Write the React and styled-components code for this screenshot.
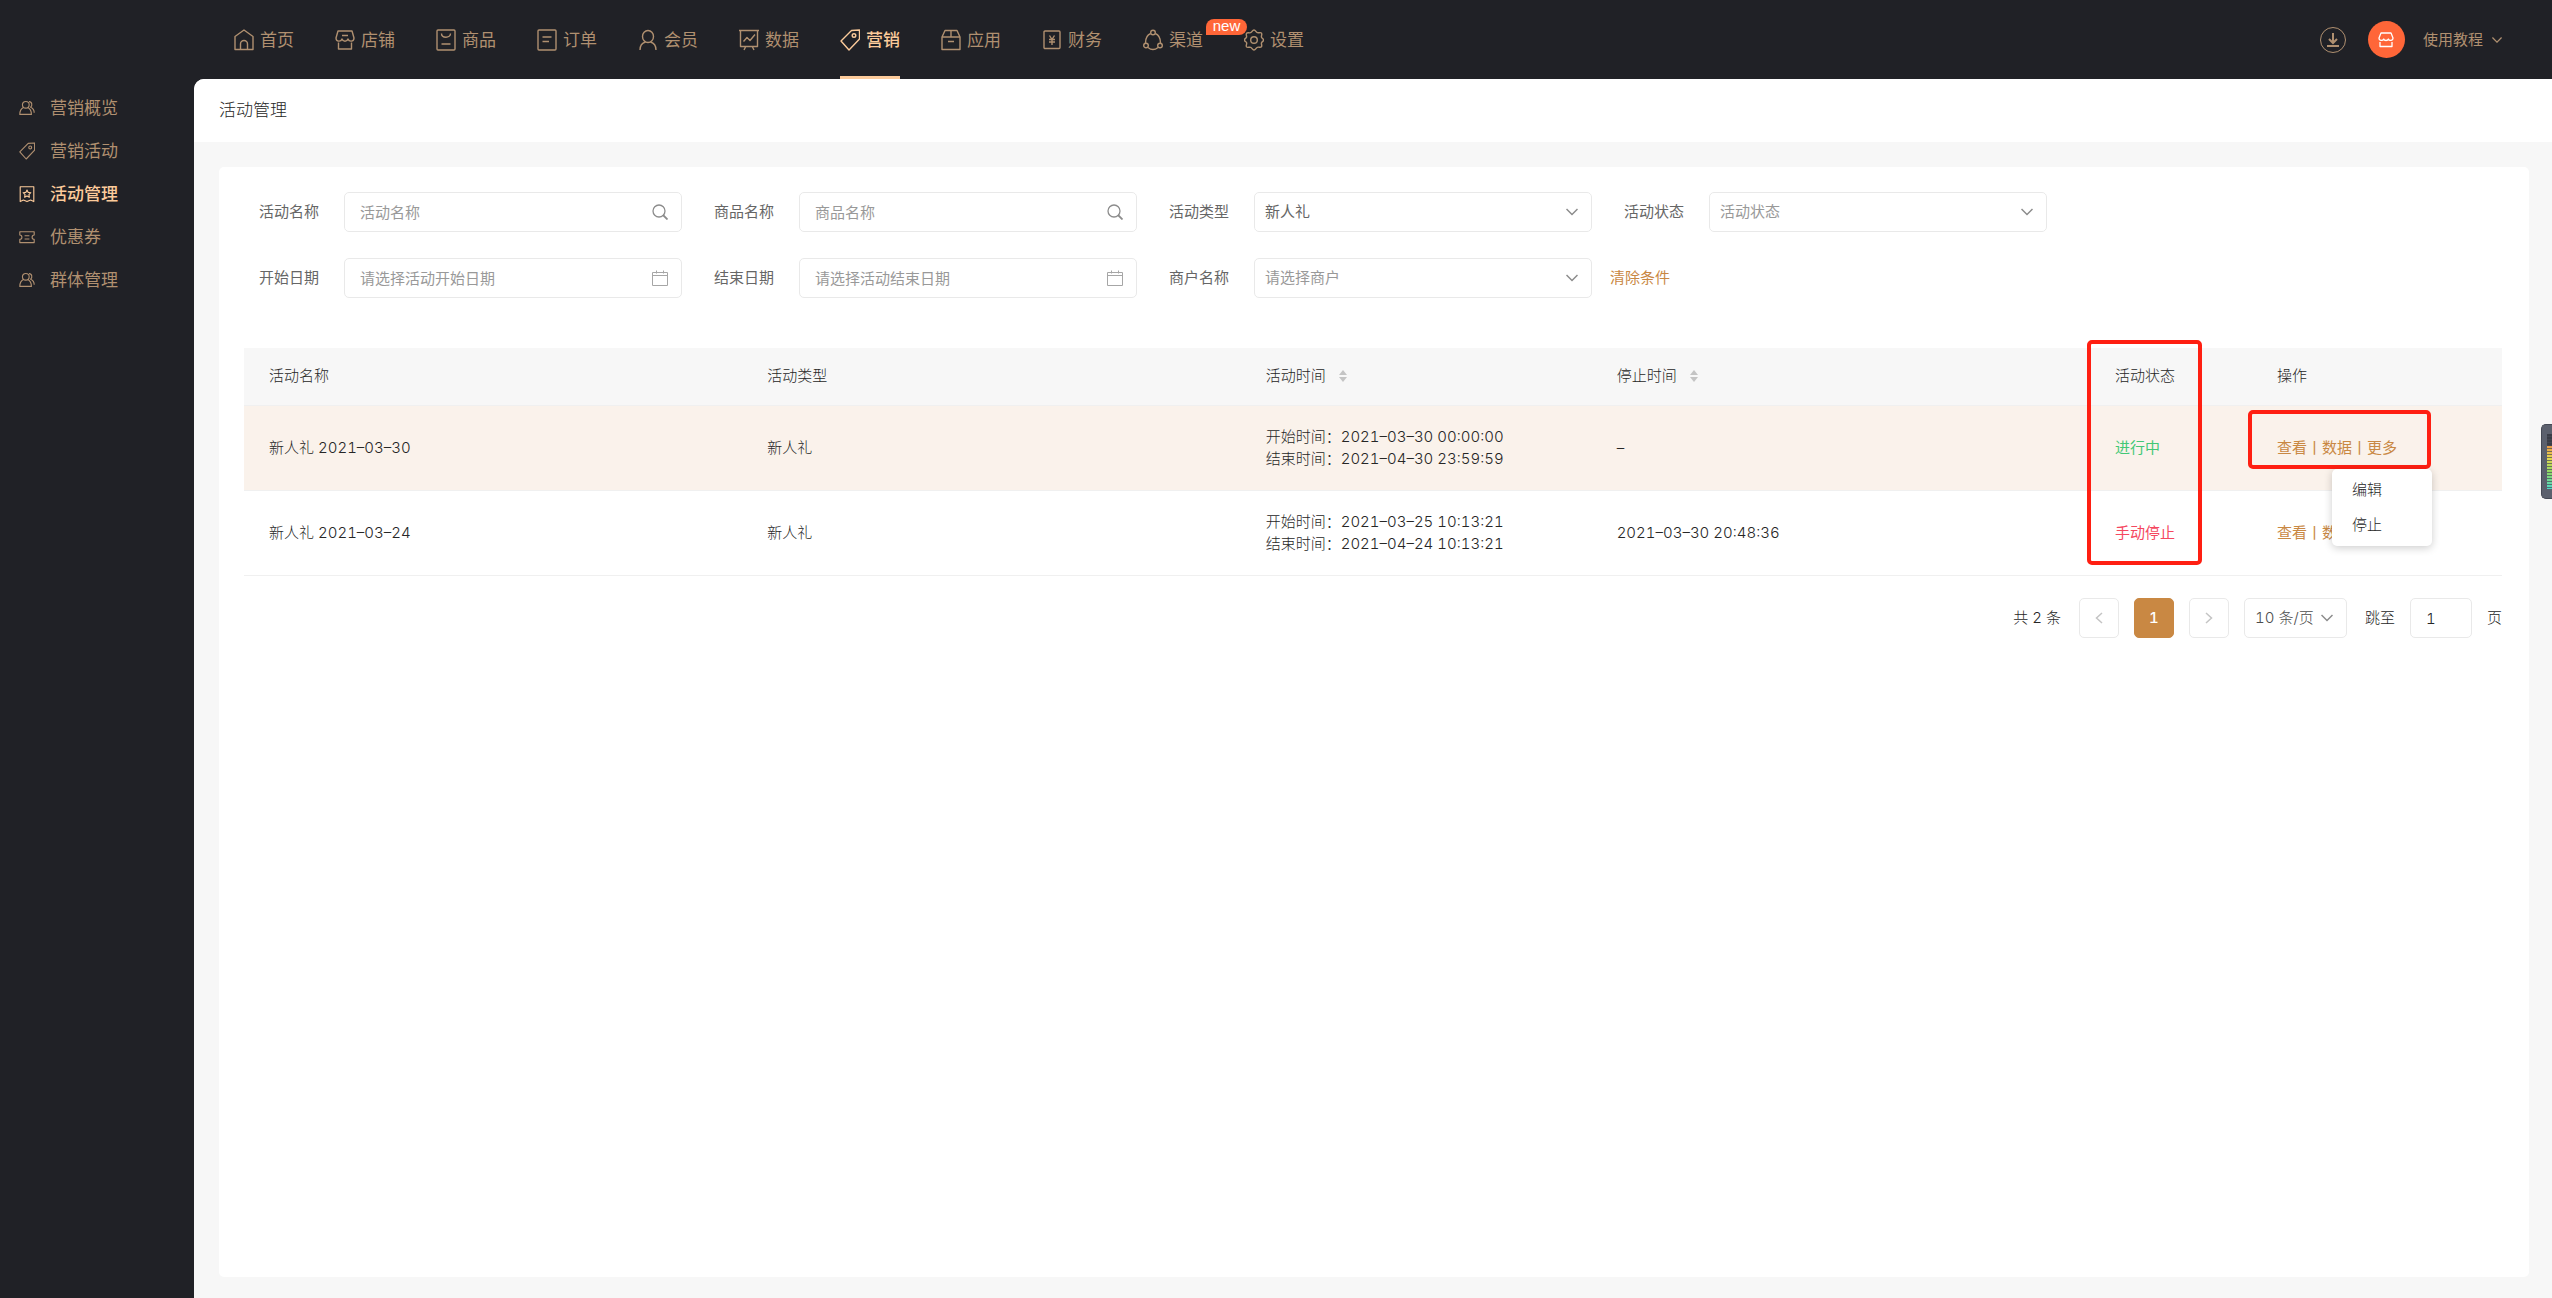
import { useState } from "react";
import styled, { createGlobalStyle, css } from "styled-components";

const theme = {
  dark: "#202126",
  sand: "#b09070",
  sandActive: "#fccb9b",
  primary: "#c98843",
  text: "#262626",
  label: "#666666",
  placeholder: "#999999",
  border: "#e9e9e9",
  grey: "#f7f7f7",
  white: "#ffffff",
  green: "#42c876",
  red: "#f5485f",
  orange: "#ff6638",
  mark: "#ff1f12",
};

/* ---------- icons ---------- */

const icons = {
  home: (
    <>
      <path d="M1 7.500 10 1l9 6.500V20.500H1z" />
      <path d="M6.500 20.500V15a3.500 3.500 0 0 1 7 0v5.500" />
    </>
  ),
  shop: (
    <>
      <path d="M3 2h14l2 7c0 4-5 4-6 1-1 3-5 3-6 0-1 3-6 3-6-1z" />
      <path d="M7 6.500h6M3.500 13.500v6.500h13v-6.500" />
    </>
  ),
  goods: (
    <>
      <rect x="1" y="1" width="18" height="20" rx="1" />
      <path d="M5.500 4.500c0 5 9 5 9 0M5.500 15h9" />
    </>
  ),
  order: (
    <>
      <rect x="1" y="1" width="18" height="20" rx="1" />
      <path d="M5.500 8h9M5.500 12.500H12" />
    </>
  ),
  member: (
    <>
      <ellipse cx="10" cy="7.500" rx="5.500" ry="6" />
      <path d="M2 21c0-4 2-7 5.500-8M18 21c0-4-2-7-5.500-8" />
    </>
  ),
  data: (
    <>
      <path d="M0 1.500h20M1.500 1.500v16h17v-16M6.500 18 5 21M13.500 18l1.500 3" />
      <path d="m4.500 12.500 3.500-4 3 3 5-6" />
    </>
  ),
  tag: (
    <>
      <path d="M1 12 11.500 1.500 19.500 1v9L9 21z" />
      <circle cx="14" cy="6.500" r="1.800" />
    </>
  ),
  app: (
    <>
      <path d="M1 8v12.500h18V8l-3-6.500H4zM1 8h18M10 1.500V8M7 12.500h6" />
    </>
  ),
  finance: (
    <>
      <rect x="2" y="2" width="16" height="17.500" rx="1" />
      <path d="m7.500 6.500 2.500 4 2.500-4M10 10.500v5.500M7 10.500h6M7 13h6" />
    </>
  ),
  channel: (
    <>
      <circle cx="10" cy="3.500" r="2.300" />
      <circle cx="3" cy="16.500" r="2.300" />
      <circle cx="17" cy="16.500" r="2.300" />
      <path d="M7.700 4.500C4 6 2.500 10 2.500 14M12.300 4.500C16 6 17.500 10 17.500 14M5 18.500c3 2.500 7 2.500 10 0" />
    </>
  ),
  setting: (
    <>
      <path d="M10 1c1.600 0 2 2.200 3.400 2.700S16.600 3 17.500 4.200 17 7 17.500 8.300 19.500 9.500 19.500 11s-1.500 1.500-2 2.700.9 3-.1 4.100-2.600 0-4 .5S11.600 21 10 21s-2-2.200-3.400-2.700-3.200.7-4.100-.5.600-2.800.1-4.100S.5 12.500.5 11s1.500-1.500 2-2.700-.9-3 .1-4.100 2.600 0 4-.5S8.400 1 10 1z" />
      <circle cx="10" cy="11" r="3.300" />
    </>
  ),
  group: (
    <>
      <circle cx="8.500" cy="7" r="4.200" />
      <path d="M5.500 10.500c-3 1.500-4.500 4-4.500 8.500h14.500c0-4.500-1.500-7-4.500-8.500M12.500 3c4 0 4.500 5 2 7 2.500 1 4.500 3 4.500 7" />
    </>
  ),
  manage: (
    <>
      <path d="M1.500 2h17v18.500l-4-2-4.500 2-4.500-2-4 2z" />
      <path d="m10 6 1.500 3 3.300.4-2.400 2.300.6 3.300-3-1.600L7 15l.6-3.300-2.400-2.300 3.300-.4z" />
    </>
  ),
  coupon: (
    <>
      <path d="M1 4.500h18v4c-3.500 0-3.500 5.500 0 5.500v4H1v-4c3.500 0 3.500-5.500 0-5.500z" />
      <path d="M7 9.500h6M7 13.500h6" />
    </>
  ),
};

const Icon = ({ name, width = 20, height = 22, stroke = 1.4 }) => (
  <svg
    width={width}
    height={height}
    viewBox="0 0 20 22"
    fill="none"
    stroke="currentColor"
    strokeWidth={stroke}
    strokeLinejoin="round"
    aria-hidden="true"
  >
    {icons[name]}
  </svg>
);

const Chevron = ({ size = 12, down = true, left }) => (
  <svg width={size} height={size} viewBox="0 0 12 12" fill="none" stroke="currentColor" strokeWidth="1.5" aria-hidden="true">
    <path d={down ? "M.5 3 6 8.500 11.500 3" : left ? "M9 1 3.500 6 9 11" : "M3 1l5.500 5L3 11"} />
  </svg>
);

const SearchIcon = () => (
  <svg width="16" height="16" viewBox="0 0 16 16" fill="none" stroke="currentColor" strokeWidth="1.300" aria-hidden="true">
    <circle cx="7" cy="7" r="6" />
    <path d="m11 11 4.500 4.500" strokeWidth="1.800" />
  </svg>
);

const CalendarIcon = () => (
  <svg width="16" height="16" viewBox="0 0 16 16" fill="none" stroke="#a6a6a6" aria-hidden="true">
    <path d="M.5 2.500h15v13H.5zM.5 5.500h15M4.500.5v3M11.500.5v3" />
  </svg>
);

const SortIcon = () => (
  <svg width="8" height="12" viewBox="0 0 8 12" fill="#c4c4c4" aria-hidden="true">
    <path d="M4 0 8 5H0zM4 12 0 7h8z" />
  </svg>
);

/* ---------- data ---------- */

const navItems = [
  { icon: "home", label: "首页" },
  { icon: "shop", label: "店铺" },
  { icon: "goods", label: "商品" },
  { icon: "order", label: "订单" },
  { icon: "member", label: "会员" },
  { icon: "data", label: "数据" },
  { icon: "tag", label: "营销", active: true },
  { icon: "app", label: "应用" },
  { icon: "finance", label: "财务" },
  { icon: "channel", label: "渠道", badge: "new" },
  { icon: "setting", label: "设置" },
];

const sideItems = [
  { icon: "group", label: "营销概览" },
  { icon: "tag", label: "营销活动" },
  { icon: "manage", label: "活动管理", active: true },
  { icon: "coupon", label: "优惠券" },
  { icon: "group", label: "群体管理" },
];

const rows = [
  {
    id: 1,
    name: "新人礼 2021–03–30",
    type: "新人礼",
    start: "2021–03–30 00:00:00",
    end: "2021–04–30 23:59:59",
    stop: "–",
    status: "进行中",
    running: true,
  },
  {
    id: 2,
    name: "新人礼 2021–03–24",
    type: "新人礼",
    start: "2021–03–25 10:13:21",
    end: "2021–04–24 10:13:21",
    stop: "2021–03–30 20:48:36",
    status: "手动停止",
  },
];

/* ---------- components ---------- */

const TextField = ({ id, label, placeholder, icon }) => {
  const [value, setValue] = useState("");
  return (
    <Field>
      <label htmlFor={id}>{label}</label>
      <Control>
        <TextInput id={id} type="text" placeholder={placeholder} value={value} onChange={(e) => setValue(e.target.value)} />
        <Suffix>{icon}</Suffix>
      </Control>
    </Field>
  );
};

const SelectField = ({ id, label, option, filled }) => (
  <Field>
    <label htmlFor={id}>{label}</label>
    <Control>
      <Select id={id} $filled={filled}>
        <option>{option}</option>
      </Select>
      <Suffix>
        <Chevron />
      </Suffix>
    </Control>
  </Field>
);

const Header = () => (
  <HeaderStyled>
    <Nav>
      {navItems.map((item) => (
        <NavLink key={item.label} href="#" $active={item.active}>
          <Icon name={item.icon} />
          {item.label}
          {item.badge && <Badge>{item.badge}</Badge>}
        </NavLink>
      ))}
    </Nav>
    <Tools>
      <DownloadButton aria-label="下载">
        <svg width="14" height="14" viewBox="0 0 14 14" fill="none" stroke="currentColor" strokeWidth="2" aria-hidden="true">
          <path d="M7 0v9M3 6l4 4 4-4M1 13h12" />
        </svg>
      </DownloadButton>
      <Avatar aria-label="店铺">
        <svg width="16" height="16" viewBox="0 0 16 16" fill="none" stroke="currentColor" strokeWidth="1.300" strokeLinejoin="round" aria-hidden="true">
          <path d="M3 1h10l2 5c0 3-4 3-4.700 1-.6 2-4 2-4.600 0C5 9 1 9 1 6zM2 10v4.500h12V10" />
        </svg>
      </Avatar>
      <Tutorial>
        使用教程
        <Chevron size={10} />
      </Tutorial>
    </Tools>
  </HeaderStyled>
);

const Filters = () => (
  <FiltersStyled>
    <FilterRow>
      <TextField id="activity" label="活动名称" placeholder="活动名称" icon={<SearchIcon />} />
      <TextField id="product" label="商品名称" placeholder="商品名称" icon={<SearchIcon />} />
      <SelectField id="type" label="活动类型" option="新人礼" filled />
      <SelectField id="status" label="活动状态" option="活动状态" />
    </FilterRow>
    <FilterRow>
      <TextField id="start" label="开始日期" placeholder="请选择活动开始日期" icon={<CalendarIcon />} />
      <TextField id="end" label="结束日期" placeholder="请选择活动结束日期" icon={<CalendarIcon />} />
      <LastGroup>
        <SelectField id="merchant" label="商户名称" option="请选择商户" />
        <TextButton type="button">清除条件</TextButton>
      </LastGroup>
    </FilterRow>
  </FiltersStyled>
);

const ActivityTable = () => (
  <Table>
    <colgroup>
      <col />
      <col />
      <Col $width={351} />
      <col />
      <Col $width={162} />
      <Col $width={250} />
    </colgroup>
    <thead>
      <tr>
        <th>活动名称</th>
        <th>活动类型</th>
        <th>
          <SortButton>
            活动时间
            <SortIcon />
          </SortButton>
        </th>
        <th>
          <SortButton>
            停止时间
            <SortIcon />
          </SortButton>
        </th>
        <th>
          活动状态
          <StatusMark />
        </th>
        <th>操作</th>
      </tr>
    </thead>
    <tbody>
      {rows.map((row) => (
        <Row key={row.id} $highlight={row.running}>
          <td>{row.name}</td>
          <td>{row.type}</td>
          <td>
            <div>开始时间：{row.start}</div>
            <div>结束时间：{row.end}</div>
          </td>
          <td>{row.stop}</td>
          <td>
            <Status $running={row.running}>{row.status}</Status>
          </td>
          <td>
            <Actions>
              <a href="#">查看</a>丨<a href="#">数据</a>丨<a href="#">更多</a>
            </Actions>
            {row.running && (
              <>
                <ActionMark />
                <Dropdown>
                  <button>编辑</button>
                  <button>停止</button>
                </Dropdown>
              </>
            )}
          </td>
        </Row>
      ))}
    </tbody>
  </Table>
);

const Pagination = () => {
  const [page, setPage] = useState("1");
  return (
    <PaginationStyled>
      <Total>共 2 条</Total>
      <PageButton aria-label="上一页">
        <Chevron down={false} left />
      </PageButton>
      <PageButton $active>1</PageButton>
      <PageButton aria-label="下一页">
        <Chevron down={false} />
      </PageButton>
      <SizeControl>
        <SizeSelect aria-label="每页条数">
          <option>10 条/页</option>
        </SizeSelect>
        <Suffix>
          <Chevron />
        </Suffix>
      </SizeControl>
      <Jump>
        跳至
        <JumpInput type="text" value={page} onChange={(e) => setPage(e.target.value)} />
        页
      </Jump>
    </PaginationStyled>
  );
};

const App = () => (
  <>
    <GlobalStyle />
    <Layout>
      <Header />
      <Body>
        <Sidebar>
          {sideItems.map((item) => (
            <SideLink key={item.label} href="#" $active={item.active}>
              <Icon name={item.icon} width={16} height={18} />
              {item.label}
            </SideLink>
          ))}
        </Sidebar>
        <Content>
          <PageTitle>活动管理</PageTitle>
          <Card>
            <Filters />
            <ActivityTable />
            <Pagination />
          </Card>
        </Content>
      </Body>
    </Layout>
    <Meter />
  </>
);

export default App;

/* ---------- styles ---------- */

const GlobalStyle = createGlobalStyle`
  * {
    box-sizing: border-box;
  }
  body {
    margin: 0;
    background: ${theme.dark};
    color: ${theme.text};
    font-family: Inter, "Noto Sans CJK SC", sans-serif;
    font-size: 15px;
    font-weight: 300;
    font-variant-numeric: tabular-nums;
    line-height: 22px;
  }
  a {
    color: inherit;
    text-decoration: none;
  }
  button, input, select {
    font: inherit;
    color: inherit;
  }
  button {
    padding: 0;
    border: none;
    background: none;
    cursor: pointer;
  }
  svg {
    display: block;
    flex: none;
  }
`;

const Layout = styled.div`
  display: flex;
  flex-direction: column;
  min-height: 100vh;
`;

const HeaderStyled = styled.header`
  display: flex;
  justify-content: space-between;
  height: 79px;
  padding: 0 50px 0 234px;
  color: ${theme.sand};
  font-weight: 400;
`;

const Nav = styled.nav`
  display: flex;
  gap: 41px;
  font-size: 17px;
`;

const NavLink = styled.a`
  position: relative;
  display: flex;
  align-items: center;
  gap: 6px;
  white-space: nowrap;
  ${({ $active }) =>
    $active &&
    css`
      color: ${theme.sandActive};
      font-weight: 500;
      box-shadow: inset 0 -3px ${theme.sandActive};
    `}
`;

const Badge = styled.span`
  position: absolute;
  left: 63px;
  top: 19px;
  z-index: 1;
  width: 41px;
  height: 16px;
  border-radius: 8px 8px 8px 0;
  background: ${theme.orange};
  color: ${theme.white};
  font-family: "Liberation Sans", sans-serif;
  font-size: 15px;
  line-height: 14px;
  text-align: center;
`;

const Tools = styled.div`
  display: flex;
  align-items: center;
`;

const DownloadButton = styled.button`
  display: grid;
  place-items: center;
  width: 26px;
  height: 26px;
  border: 1px solid ${theme.sand};
  border-radius: 50%;
`;

const Avatar = styled.button`
  display: grid;
  place-items: center;
  width: 37px;
  height: 37px;
  margin: 0 18px 0 22px;
  border-radius: 50%;
  background: ${theme.orange};
  color: ${theme.white};
`;

const Tutorial = styled.button`
  display: flex;
  align-items: center;
  gap: 9px;
`;

const Body = styled.div`
  display: flex;
  flex: 1;
`;

const Sidebar = styled.aside`
  width: 194px;
  flex: none;
  padding-top: 7px;
`;

const SideLink = styled.a`
  display: flex;
  align-items: center;
  gap: 15px;
  height: 43px;
  padding-left: 19px;
  color: ${({ $active }) => ($active ? theme.sandActive : theme.sand)};
  font-size: 17px;
  font-weight: ${({ $active }) => ($active ? 500 : 400)};
`;

const Content = styled.main`
  display: flex;
  flex-direction: column;
  flex: 1;
  min-width: 0;
  overflow: hidden;
  border-top-left-radius: 10px;
  background: ${theme.grey};
`;

const PageTitle = styled.h1`
  margin: 0;
  padding: 20px 25px 21px;
  background: ${theme.white};
  font-size: 17px;
  font-weight: 300;
`;

const Card = styled.section`
  flex: 1;
  margin: 25px 23px 21px 25px;
  padding: 25px 27px 25px 25px;
  border-radius: 5px;
  background: ${theme.white};
`;

const FiltersStyled = styled.form`
  display: grid;
  gap: 26px;
  padding: 0 15px;
  margin-bottom: 50px;
  font-weight: 400;
`;

const FilterRow = styled.div`
  display: flex;
  flex-wrap: wrap;
  gap: 26px 32px;
`;

const LastGroup = styled.div`
  display: flex;
  align-items: center;
  gap: 18px;
`;

const Field = styled.div`
  display: flex;
  align-items: center;
  gap: 25px;
  color: ${theme.label};
`;

const Control = styled.div`
  position: relative;
  width: 338px;
`;

const box = css`
  width: 100%;
  height: 40px;
  border: 1px solid ${theme.border};
  border-radius: 5px;
  background: ${theme.white};
`;

const TextInput = styled.input`
  ${box}
  padding: 0 40px 0 15px;
  &::placeholder {
    color: ${theme.placeholder};
    opacity: 1;
  }
`;

const Select = styled.select`
  ${box}
  padding: 0 30px 0 10px;
  appearance: none;
  color: ${({ $filled }) => ($filled ? theme.label : theme.placeholder)};
`;

const Suffix = styled.span`
  position: absolute;
  top: 0;
  right: 14px;
  display: flex;
  align-items: center;
  height: 100%;
  color: #8c8c8c;
  pointer-events: none;
`;

const TextButton = styled.button`
  color: ${theme.primary};
`;

const Table = styled.table`
  width: 100%;
  border-collapse: separate;
  border-spacing: 0;
  table-layout: fixed;
  th,
  td {
    position: relative;
    padding: 20px 25px;
    border-bottom: 1px solid #f0f0f0;
    text-align: left;
    font-weight: 300;
  }
  th {
    padding: 17px 25px 18px;
    background: ${theme.grey};
  }
`;

const Col = styled.col`
  width: ${({ $width }) => $width}px;
`;

const Row = styled.tr`
  background: ${({ $highlight }) => ($highlight ? "#faf2eb" : theme.white)};
`;

const SortButton = styled.button`
  display: flex;
  align-items: center;
  gap: 13px;
`;

const Status = styled.span`
  color: ${({ $running }) => ($running ? theme.green : theme.red)};
  font-weight: 400;
`;

const Actions = styled.div`
  color: ${theme.primary};
  font-weight: 400;
  white-space: nowrap;
`;

const Mark = styled.span`
  position: absolute;
  z-index: 1;
  border: 4px solid ${theme.mark};
  border-radius: 5px;
  pointer-events: none;
`;

const StatusMark = styled(Mark)`
  left: -3px;
  top: -8px;
  width: 115px;
  height: 225px;
`;

const ActionMark = styled(Mark)`
  left: -4px;
  top: 4px;
  width: 183px;
  height: 59px;
`;

const Dropdown = styled.div`
  position: absolute;
  left: 80px;
  top: 63px;
  z-index: 2;
  display: flex;
  flex-direction: column;
  width: 100px;
  padding: 3px 0 4px;
  border-radius: 5px;
  background: ${theme.white};
  box-shadow: 0 2px 8px rgba(0, 0, 0, 0.2);
  button {
    height: 35px;
    padding-left: 20px;
    text-align: left;
  }
`;

const PaginationStyled = styled.div`
  display: flex;
  justify-content: flex-end;
  align-items: center;
  gap: 15px;
  margin-top: 22px;
`;

const Total = styled.span`
  margin-right: 3px;
`;

const PageButton = styled.button`
  display: grid;
  place-items: center;
  width: 40px;
  height: 40px;
  border: 1px solid ${({ $active }) => ($active ? theme.primary : theme.border)};
  border-radius: 5px;
  background: ${({ $active }) => ($active ? theme.primary : theme.white)};
  color: ${({ $active }) => ($active ? theme.white : "#c4c4c4")};
  font-weight: 500;
`;

const SizeControl = styled.div`
  position: relative;
  width: 103px;
`;

const SizeSelect = styled.select`
  ${box}
  padding: 0 10px;
  appearance: none;
  color: #4d4d4d;
`;

const Jump = styled.label`
  display: flex;
  align-items: center;
  gap: 15px;
  margin-left: 3px;
`;

const JumpInput = styled.input`
  ${box}
  width: 62px;
  padding: 0 15px;
`;

/* level meter docked on the window edge */
const Meter = styled.div`
  position: fixed;
  top: 424px;
  right: 0;
  width: 11px;
  height: 75px;
  padding: 9px 0 9px 5px;
  border: 1px solid #454955;
  border-right: none;
  border-radius: 5px 0 0 5px;
  background: #5b606d;
  &::before {
    content: "";
    display: block;
    height: 100%;
    background:
      repeating-linear-gradient(transparent 0 2px, rgba(70, 74, 86, 0.7) 2px 3px),
      linear-gradient(#3a3d47 0 12px, #e89a4a 12px, #e8d84f 24px, #8fd866 38px, #4fd8c8);
  }
`;
